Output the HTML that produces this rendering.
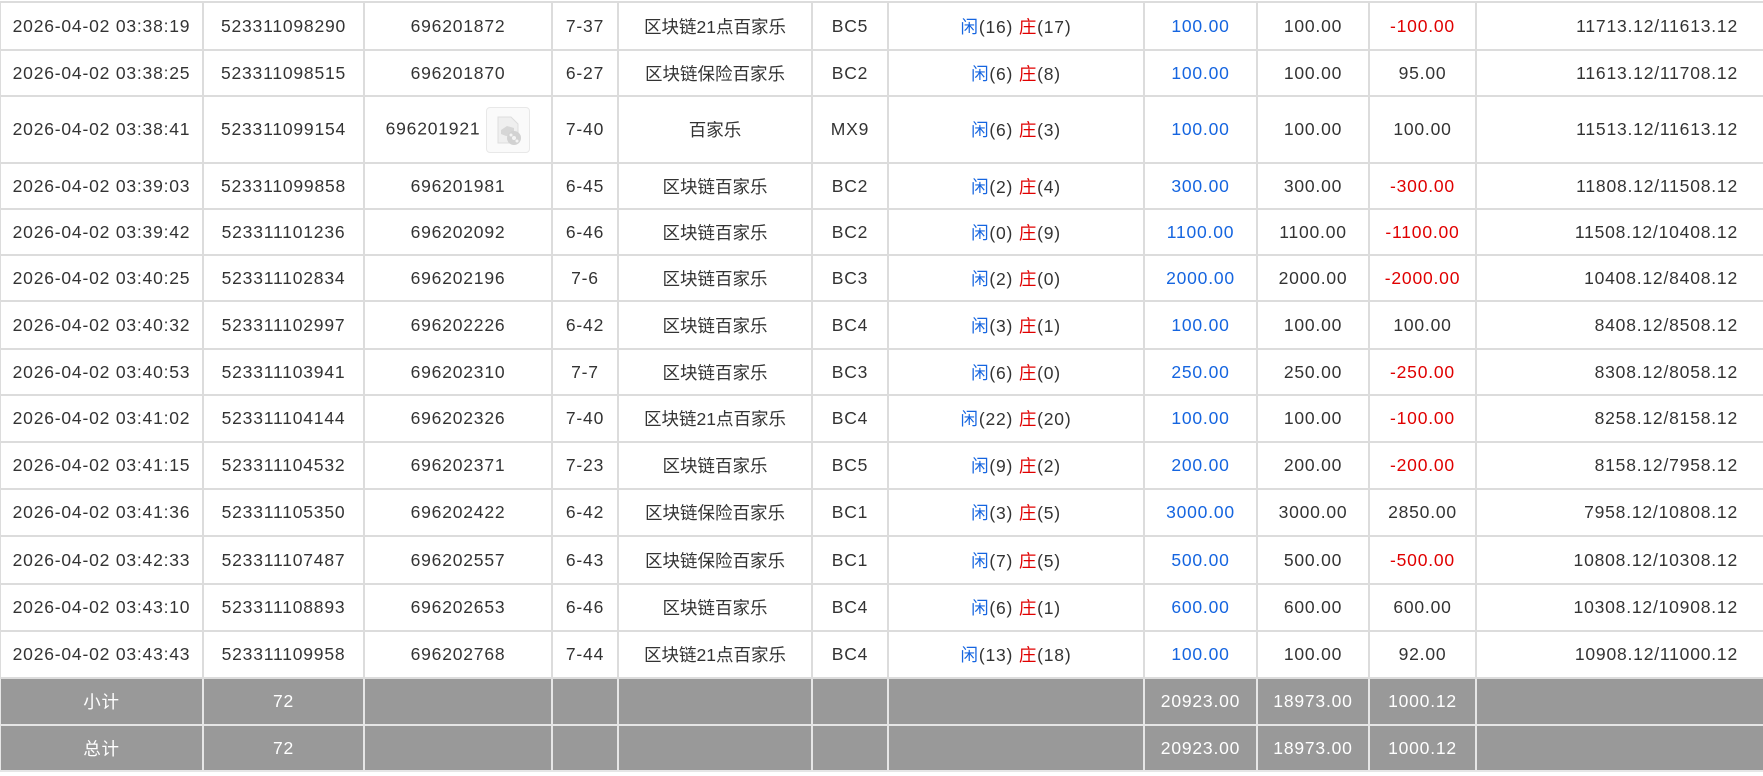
<!DOCTYPE html>
<html><head><meta charset="utf-8">
<style>
html,body{margin:0;padding:0;background:#fff;width:1763px;height:776px;overflow:hidden}
table{position:absolute;left:-1px;top:1px;border-collapse:collapse;table-layout:fixed;width:1765px;
font-family:"Liberation Sans","Noto Sans CJK SC",sans-serif;font-size:17.5px;color:#333;letter-spacing:0.8px}
td{border:2px solid #dcdcdc;text-align:center;padding:0;white-space:nowrap;overflow:hidden}
td.r{text-align:right;padding-right:26px}
.cj{letter-spacing:0}
.b{color:#1565e0}.d{color:#e00000}
tr.f td{background:#999;color:#fff;border-color:#e6e6e6}
.ic{display:inline-block;width:42px;height:44px;border:1px solid #e8e8e8;border-radius:4px;background:#fafafa;vertical-align:middle;margin-left:6px;position:relative}
</style></head><body>
<table>
<colgroup><col style="width:203px"><col style="width:161px"><col style="width:188px"><col style="width:66px"><col style="width:194px"><col style="width:76px"><col style="width:256px"><col style="width:113px"><col style="width:112px"><col style="width:107px"><col style="width:289px"></colgroup>
<tr style="height:48px"><td>2026-04-02 03:38:19</td><td>523311098290</td><td>696201872</td><td>7-37</td><td class="cj">区块链21点百家乐</td><td>BC5</td><td><span class="b">闲</span>(16) <span class="d">庄</span>(17)</td><td class="b">100.00</td><td>100.00</td><td class="d">-100.00</td><td class="r">11713.12/11613.12</td></tr>
<tr style="height:46px"><td>2026-04-02 03:38:25</td><td>523311098515</td><td>696201870</td><td>6-27</td><td class="cj">区块链保险百家乐</td><td>BC2</td><td><span class="b">闲</span>(6) <span class="d">庄</span>(8)</td><td class="b">100.00</td><td>100.00</td><td>95.00</td><td class="r">11613.12/11708.12</td></tr>
<tr style="height:67px"><td>2026-04-02 03:38:41</td><td>523311099154</td><td>696201921<span class="ic"><svg width="42" height="44" viewBox="0 0 42 44"><path d="M11 9h13l7 7v19H11z" fill="#efefef" stroke="#ddd"/><path d="M14 22l6-4 7 2v7l-8 1-5-2z" fill="#d6d6d6"/><circle cx="27" cy="30" r="7" fill="#d2d2d2"/><circle cx="27" cy="30" r="2" fill="#f4f4f4"/><circle cx="24" cy="27" r="1.5" fill="#f4f4f4"/><circle cx="30" cy="33" r="1.5" fill="#f4f4f4"/></svg></span></td><td>7-40</td><td class="cj">百家乐</td><td>MX9</td><td><span class="b">闲</span>(6) <span class="d">庄</span>(3)</td><td class="b">100.00</td><td>100.00</td><td>100.00</td><td class="r">11513.12/11613.12</td></tr>
<tr style="height:46px"><td>2026-04-02 03:39:03</td><td>523311099858</td><td>696201981</td><td>6-45</td><td class="cj">区块链百家乐</td><td>BC2</td><td><span class="b">闲</span>(2) <span class="d">庄</span>(4)</td><td class="b">300.00</td><td>300.00</td><td class="d">-300.00</td><td class="r">11808.12/11508.12</td></tr>
<tr style="height:46px"><td>2026-04-02 03:39:42</td><td>523311101236</td><td>696202092</td><td>6-46</td><td class="cj">区块链百家乐</td><td>BC2</td><td><span class="b">闲</span>(0) <span class="d">庄</span>(9)</td><td class="b">1100.00</td><td>1100.00</td><td class="d">-1100.00</td><td class="r">11508.12/10408.12</td></tr>
<tr style="height:46px"><td>2026-04-02 03:40:25</td><td>523311102834</td><td>696202196</td><td>7-6</td><td class="cj">区块链百家乐</td><td>BC3</td><td><span class="b">闲</span>(2) <span class="d">庄</span>(0)</td><td class="b">2000.00</td><td>2000.00</td><td class="d">-2000.00</td><td class="r">10408.12/8408.12</td></tr>
<tr style="height:48px"><td>2026-04-02 03:40:32</td><td>523311102997</td><td>696202226</td><td>6-42</td><td class="cj">区块链百家乐</td><td>BC4</td><td><span class="b">闲</span>(3) <span class="d">庄</span>(1)</td><td class="b">100.00</td><td>100.00</td><td>100.00</td><td class="r">8408.12/8508.12</td></tr>
<tr style="height:46px"><td>2026-04-02 03:40:53</td><td>523311103941</td><td>696202310</td><td>7-7</td><td class="cj">区块链百家乐</td><td>BC3</td><td><span class="b">闲</span>(6) <span class="d">庄</span>(0)</td><td class="b">250.00</td><td>250.00</td><td class="d">-250.00</td><td class="r">8308.12/8058.12</td></tr>
<tr style="height:47px"><td>2026-04-02 03:41:02</td><td>523311104144</td><td>696202326</td><td>7-40</td><td class="cj">区块链21点百家乐</td><td>BC4</td><td><span class="b">闲</span>(22) <span class="d">庄</span>(20)</td><td class="b">100.00</td><td>100.00</td><td class="d">-100.00</td><td class="r">8258.12/8158.12</td></tr>
<tr style="height:47px"><td>2026-04-02 03:41:15</td><td>523311104532</td><td>696202371</td><td>7-23</td><td class="cj">区块链百家乐</td><td>BC5</td><td><span class="b">闲</span>(9) <span class="d">庄</span>(2)</td><td class="b">200.00</td><td>200.00</td><td class="d">-200.00</td><td class="r">8158.12/7958.12</td></tr>
<tr style="height:47px"><td>2026-04-02 03:41:36</td><td>523311105350</td><td>696202422</td><td>6-42</td><td class="cj">区块链保险百家乐</td><td>BC1</td><td><span class="b">闲</span>(3) <span class="d">庄</span>(5)</td><td class="b">3000.00</td><td>3000.00</td><td>2850.00</td><td class="r">7958.12/10808.12</td></tr>
<tr style="height:48px"><td>2026-04-02 03:42:33</td><td>523311107487</td><td>696202557</td><td>6-43</td><td class="cj">区块链保险百家乐</td><td>BC1</td><td><span class="b">闲</span>(7) <span class="d">庄</span>(5)</td><td class="b">500.00</td><td>500.00</td><td class="d">-500.00</td><td class="r">10808.12/10308.12</td></tr>
<tr style="height:47px"><td>2026-04-02 03:43:10</td><td>523311108893</td><td>696202653</td><td>6-46</td><td class="cj">区块链百家乐</td><td>BC4</td><td><span class="b">闲</span>(6) <span class="d">庄</span>(1)</td><td class="b">600.00</td><td>600.00</td><td>600.00</td><td class="r">10308.12/10908.12</td></tr>
<tr style="height:47px"><td>2026-04-02 03:43:43</td><td>523311109958</td><td>696202768</td><td>7-44</td><td class="cj">区块链21点百家乐</td><td>BC4</td><td><span class="b">闲</span>(13) <span class="d">庄</span>(18)</td><td class="b">100.00</td><td>100.00</td><td>92.00</td><td class="r">10908.12/11000.12</td></tr>
<tr class="f" style="height:47px"><td>小计</td><td>72</td><td></td><td></td><td></td><td></td><td></td><td>20923.00</td><td>18973.00</td><td>1000.12</td><td></td></tr>
<tr class="f" style="height:46px"><td>总计</td><td>72</td><td></td><td></td><td></td><td></td><td></td><td>20923.00</td><td>18973.00</td><td>1000.12</td><td></td></tr>
</table>
</body></html>
